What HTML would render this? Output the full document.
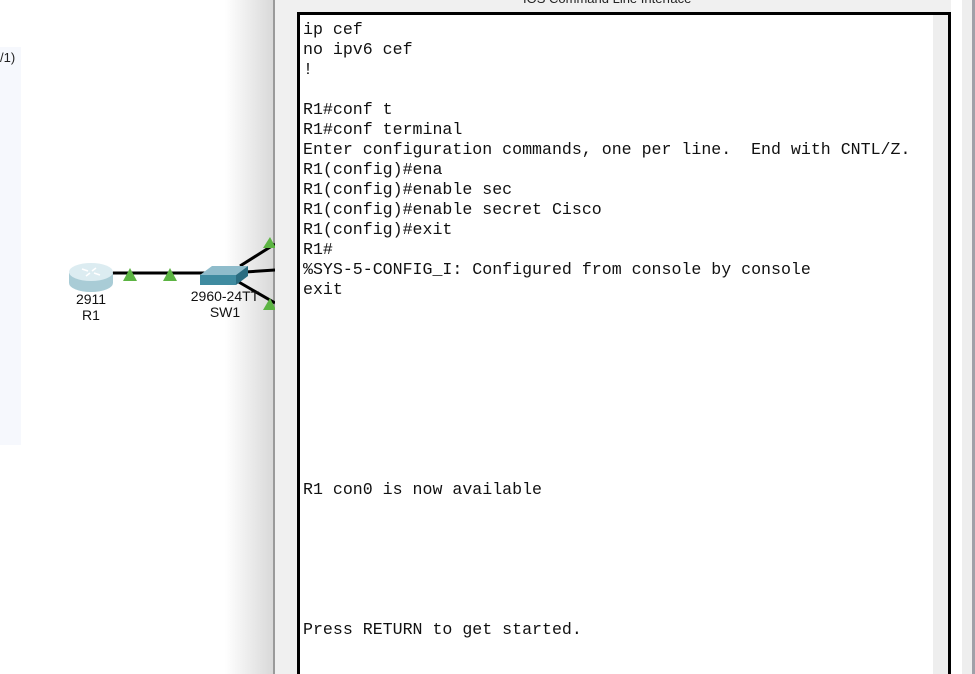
<!DOCTYPE html>
<html style="width:975px;height:674px;overflow:hidden"><head><meta charset="utf-8"><style>
*{margin:0;padding:0;box-sizing:border-box}
body{width:975px;height:674px;overflow:hidden;background:#fff;position:relative;font-family:"Liberation Sans",sans-serif}
.abs{position:absolute}
#term{left:297px;top:12px;width:654px;height:662px;border:3px solid #000;border-bottom:none;background:#fff;overflow:hidden}
#term pre{position:absolute;left:3px;top:5px;font-family:"Liberation Mono",monospace;font-size:16.6px;line-height:20px;color:#111}
</style></head><body>
<div class="abs" style="left:0;top:47px;width:21px;height:398px;background:#f6f8fd"></div>
<div class="abs" style="left:0;top:50px;font-size:13px;color:#222">/1)</div>
<div class="abs" style="left:225px;top:0;width:49px;height:674px;background:linear-gradient(to right,rgba(255,255,255,0),#d8d8d8)"></div>
<div class="abs" style="left:273px;top:0;width:2px;height:674px;background:#9a9a9a"></div>
<div class="abs" style="left:275px;top:0;width:700px;height:674px;background:#f0f0f0"></div>
<div class="abs" style="left:523px;top:-9px;font-size:13px;color:#222">IOS Command Line Interface</div>
<div class="abs" style="left:951px;top:0;width:11px;height:674px;background:#fff"></div>
<div class="abs" style="left:962px;top:0;width:10px;height:674px;background:#eeeeee"></div>
<div class="abs" style="left:972px;top:0;width:3px;height:674px;background:#a0a0a8"></div>
<svg class="abs" style="left:0;top:0" width="275" height="674">
<line x1="110" y1="273" x2="205" y2="273" stroke="#000" stroke-width="3"/>
<line x1="240" y1="266" x2="275" y2="244" stroke="#000" stroke-width="3"/>
<line x1="245" y1="272" x2="275" y2="270" stroke="#000" stroke-width="3"/>
<line x1="237" y1="281" x2="275" y2="303" stroke="#000" stroke-width="3"/>
<polygon points="123,281 130,268 137,281" fill="#5cb443"/>
<polygon points="163,281 170,268 177,281" fill="#5cb443"/>
<polygon points="263,248 270,237 276,248" fill="#5cb443"/>
<polygon points="263,310 270,298 276,310" fill="#5cb443"/>
<path d="M69 273 v10 a22 9 0 0 0 44 0 v-10z" fill="#a9ccd6"/>
<ellipse cx="91" cy="272" rx="22" ry="9" fill="#dcecf1"/>
<path d="M82 269 l6 2 M100 275 l-6 -2 M96 268 l-4 3 M86 276 l4 -3" stroke="#fff" stroke-width="1.5"/>
<polygon points="200,275 212,266 248,266 236,275" fill="#8fbccb"/>
<polygon points="200,275 236,275 236,285 200,285" fill="#3f8ba0"/>
<polygon points="236,275 248,266 248,276 236,285" fill="#2a6c80"/>
</svg>
<div class="abs" style="left:62px;top:291px;width:58px;text-align:center;font-size:14px;line-height:16px;color:#111">2911<br>R1</div>
<div class="abs" style="left:180px;top:288px;width:90px;text-align:center;font-size:14px;line-height:16px;color:#111">2960-24TT<br>SW1</div>
<div id="term" class="abs"><div class="abs" style="left:633px;top:0;width:15px;height:680px;background:#eeeeee"></div>
<pre>ip cef
no ipv6 cef
!

R1#conf t
R1#conf terminal
Enter configuration commands, one per line.  End with CNTL/Z.
R1(config)#ena
R1(config)#enable sec
R1(config)#enable secret Cisco
R1(config)#exit
R1#
%SYS-5-CONFIG_I: Configured from console by console
exit









R1 con0 is now available






Press RETURN to get started.</pre></div>
</body></html>
